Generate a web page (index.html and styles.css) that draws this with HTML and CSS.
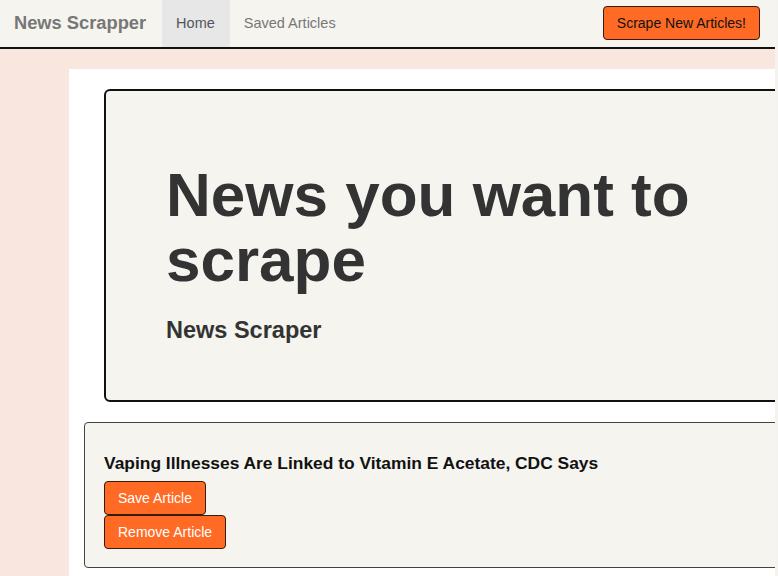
FILE: index.html
```html
<!DOCTYPE html>
<html lang="en">
<head>
<meta charset="utf-8">
<title>News Scrapper</title>
<link rel="stylesheet" href="styles.css">
</head>
<body>
<div class="page">
  <nav class="navbar">
    <a class="brand" href="#">News Scrapper</a>
    <ul class="nav-links">
      <li><a class="nav-link active" href="#">Home</a></li>
      <li><a class="nav-link" href="#">Saved Articles</a></li>
    </ul>
    <button class="btn btn-scrape">Scrape New Articles!</button>
  </nav>
  <main class="container">
    <section class="jumbotron">
      <h1 class="jumbo-title">News you want to scrape</h1>
      <h4 class="jumbo-sub">News Scraper</h4>
    </section>
    <article class="card">
      <h3 class="card-title">Vaping Illnesses Are Linked to Vitamin E Acetate, CDC Says</h3>
      <div class="card-actions">
        <button class="btn btn-orange">Save Article</button>
        <button class="btn btn-orange">Remove Article</button>
      </div>
    </article>
  </main>
</div>
</body>
</html>
```
FILE: styles.css
```css
html {
  background: #f4f3ef;
  height: 100%;
  overflow: hidden;
}
body {
  margin: 0;
  width: 775px;
  height: 100%;
  overflow: hidden;
  background: #f9e6df;
  font-family: "Liberation Sans", Arial, sans-serif;
  color: #333;
}
.page {
  width: 775px;
}
.navbar {
  display: flex;
  align-items: stretch;
  height: 47px;
  background: #f5f4ef;
  border-bottom: 2px solid #111;
  padding: 0 15px 0 14px;
}
.brand {
  display: flex;
  align-items: center;
  font-size: 18.3px;
  font-weight: bold;
  color: #777;
  text-decoration: none;
  margin-right: 16px;
  padding-bottom: 1px;
}
.nav-links {
  display: flex;
  list-style: none;
  margin: 0;
  padding: 0;
}
.nav-links li {
  display: flex;
}
.nav-link {
  display: flex;
  align-items: center;
  padding: 0 15px 1px 14px;
  font-size: 14.5px;
  color: #777;
  text-decoration: none;
}
.nav-link.active {
  background: #e7e7e7;
  color: #555;
}
.btn {
  font-family: "Liberation Sans", Arial, sans-serif;
  font-size: 14px;
  border: 1px solid #3a1a08;
  border-radius: 4px;
  background: #ff6a25;
  cursor: pointer;
  height: 34px;
  padding: 0 13px;
}
.btn-scrape {
  margin-left: auto;
  align-self: flex-start;
  margin-top: 6px;
  color: #111;
}
.container {
  margin: 20px 0 0 69px;
  width: 740px;
  background: #fff;
  padding: 20px 0 40px 15px;
}
.jumbotron {
  margin-left: 20px;
  background: #f5f4ef;
  border: 2px solid #111;
  border-radius: 6px;
  padding: 71px 40px 40px 60px;
  height: 313px;
  box-sizing: border-box;
}
.jumbo-title {
  margin: 0;
  font-size: 62px;
  line-height: 65px;
  font-weight: bold;
  color: #333;
}
.jumbo-sub {
  margin: 24px 0 0;
  font-size: 23.5px;
  line-height: 28px;
  font-weight: bold;
  color: #333;
}
.card {
  margin-top: 20px;
  background: #f5f4ef;
  border: 1px solid #444;
  border-radius: 4px;
  padding: 29px 19px 18px 19px;
  height: 146px;
  box-sizing: border-box;
}
.card-title {
  margin: 0 0 7px;
  font-size: 17.4px;
  line-height: 22px;
  font-weight: bold;
  color: #111;
}
.card-actions {
  display: flex;
  flex-direction: column;
  align-items: flex-start;
}
.btn-orange {
  color: #fff;
}
```
